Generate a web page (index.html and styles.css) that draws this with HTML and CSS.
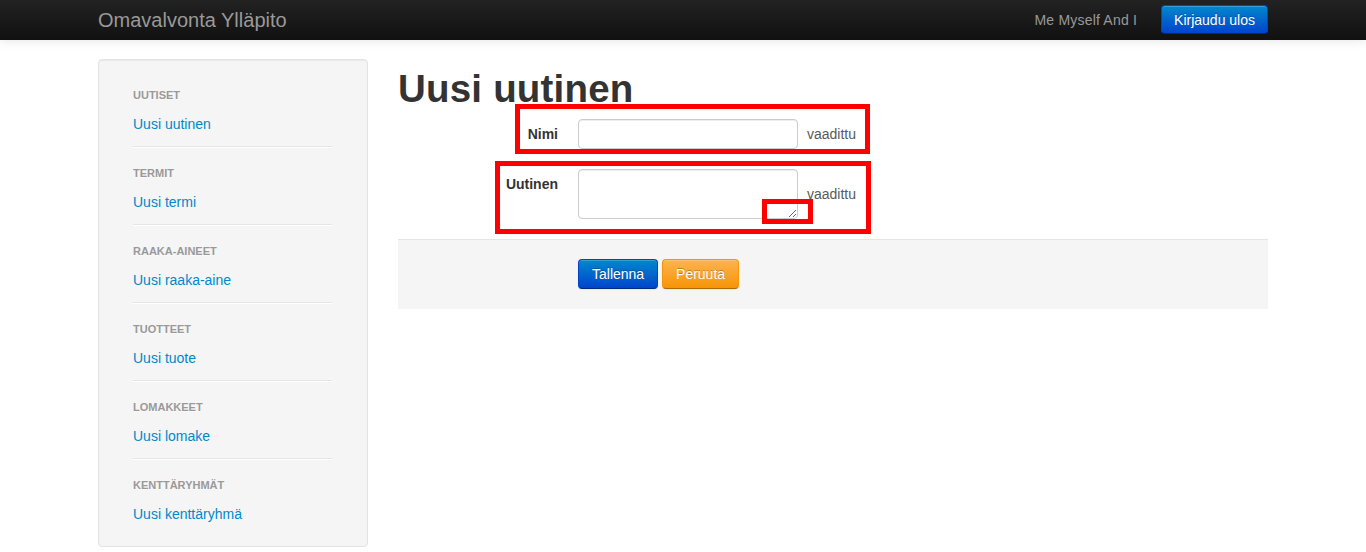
FILE: index.html
```html
<!DOCTYPE html>
<html lang="fi">
<head>
<meta charset="utf-8">
<title>Omavalvonta Ylläpito</title>
<link rel="stylesheet" href="styles.css">
</head>
<body>
<header class="navbar">
  <div class="container navbar-inner">
    <a class="brand" href="#">Omavalvonta Ylläpito</a>
    <div class="navbar-right">
      <span class="navbar-text">Me Myself And I</span>
      <a class="btn btn-primary btn-nav" href="#">Kirjaudu ulos</a>
    </div>
  </div>
</header>
<div class="container main">
  <aside class="well sidebar">
    <ul class="nav-list">
      <li class="nav-header">Uutiset</li>
      <li class="nav-link"><a href="#">Uusi uutinen</a></li>
      <li class="divider"></li>
      <li class="nav-header">Termit</li>
      <li class="nav-link"><a href="#">Uusi termi</a></li>
      <li class="divider"></li>
      <li class="nav-header">Raaka-aineet</li>
      <li class="nav-link"><a href="#">Uusi raaka-aine</a></li>
      <li class="divider"></li>
      <li class="nav-header">Tuotteet</li>
      <li class="nav-link"><a href="#">Uusi tuote</a></li>
      <li class="divider"></li>
      <li class="nav-header">Lomakkeet</li>
      <li class="nav-link"><a href="#">Uusi lomake</a></li>
      <li class="divider"></li>
      <li class="nav-header">Kenttäryhmät</li>
      <li class="nav-link"><a href="#">Uusi kenttäryhmä</a></li>
    </ul>
  </aside>
  <main class="content">
    <h1 class="title">Uusi uutinen</h1>
    <form class="form-horizontal">
      <div class="control-group">
        <label class="control-label" for="nimi">Nimi</label>
        <div class="controls">
          <input id="nimi" type="text" class="input"><span class="help-inline">vaadittu</span>
        </div>
      </div>
      <div class="control-group">
        <label class="control-label" for="uutinen">Uutinen</label>
        <div class="controls">
          <textarea id="uutinen" class="textarea" rows="2"></textarea><span class="help-inline">vaadittu</span>
        </div>
      </div>
      <div class="form-actions">
        <button type="button" class="btn btn-primary">Tallenna</button>
        <button type="button" class="btn btn-warning">Peruuta</button>
      </div>
    </form>
    <div class="mark mark-name"></div>
    <div class="mark mark-text"></div>
    <div class="mark mark-grip"></div>
  </main>
</div>
</body>
</html>
```
FILE: styles.css
```css
* { box-sizing: border-box; }

body {
  margin: 0;
  font-family: "Liberation Sans", Arial, sans-serif;
  font-size: 14px;
  line-height: 20px;
  color: #333;
  background: #fff;
}

a { text-decoration: none; }

.container {
  width: 1170px;
  margin: 0 auto;
}

/* Navbar */
.navbar {
  height: 40px;
  background: linear-gradient(to bottom, #222222, #111111);
  box-shadow: 0 1px 10px rgba(0, 0, 0, 0.1);
  position: relative;
  z-index: 2;
}

.navbar-inner {
  display: flex;
  align-items: center;
  justify-content: space-between;
  height: 40px;
}

.brand {
  font-size: 20px;
  line-height: 20px;
  color: #999;
  padding: 10px 0;
}

.navbar-right {
  display: flex;
  align-items: center;
  gap: 24px;
}

.navbar-text {
  color: #999;
  line-height: 40px;
  letter-spacing: 0.2px;
}

/* Buttons */
.btn {
  display: inline-block;
  font-family: "Liberation Sans", Arial, sans-serif;
  font-size: 14px;
  line-height: 20px;
  padding: 4px 13px;
  height: 30px;
  border-radius: 4px;
  border: 1px solid rgba(0, 0, 0, 0.15);
  border-bottom-color: rgba(0, 0, 0, 0.25);
  color: #fff;
  text-shadow: 0 -1px 0 rgba(0, 0, 0, 0.25);
  box-shadow: inset 0 1px 0 rgba(255, 255, 255, 0.2), 0 1px 2px rgba(0, 0, 0, 0.05);
  cursor: pointer;
  vertical-align: middle;
}

.btn-primary {
  background: linear-gradient(to bottom, #0088cc, #0044cc);
  border-color: #0044cc #0044cc #002a80;
}

.btn-warning {
  background: linear-gradient(to bottom, #fbb450, #f89406);
  border-color: #f89406 #f89406 #ad6704;
}

.btn-nav {
  height: 29px;
  padding: 4px 12px 3px;
  margin-top: -2px;
}

/* Main layout */
.main {
  display: flex;
  gap: 30px;
  margin-top: 19px;
  align-items: flex-start;
}

.well {
  width: 270px;
  background: #f5f5f5;
  border: 1px solid #e3e3e3;
  border-radius: 4px;
  box-shadow: inset 0 1px 1px rgba(0, 0, 0, 0.05);
}

.sidebar {
  padding: 22px 34px 19px;
}

.nav-list {
  list-style: none;
  margin: 0;
  padding: 0;
}

.nav-header {
  font-size: 11px;
  font-weight: bold;
  line-height: 20px;
  padding: 3px 0;
  color: #999;
  text-transform: uppercase;
  text-shadow: 0 1px 0 rgba(255, 255, 255, 0.5);
}

.nav-link {
  margin-top: 3px;
  padding: 3px 0;
  line-height: 20px;
}

.nav-link a {
  color: #0088cc;
}

.divider {
  height: 2px;
  margin: 9px 1px 12px 0;
  background: #e5e5e5;
  border-bottom: 1px solid #fff;
}

/* Content */
.content {
  width: 870px;
  position: relative;
}

.title {
  font-size: 38.5px;
  line-height: 40px;
  font-weight: bold;
  margin: 10px 0;
  color: #333;
  letter-spacing: 0.2px;
}

.form-horizontal {
  margin: 0 0 20px;
}

.control-group {
  display: flex;
  margin-bottom: 20px;
}

.control-label {
  width: 160px;
  padding-top: 5px;
  text-align: right;
  font-weight: bold;
  flex: none;
}

.controls {
  margin-left: 20px;
  display: flex;
  align-items: center;
}

.input,
.textarea {
  width: 220px;
  padding: 4px 6px;
  font-family: "Liberation Sans", Arial, sans-serif;
  font-size: 14px;
  line-height: 20px;
  color: #555;
  background: #fff;
  border: 1px solid #ccc;
  border-radius: 4px;
  box-shadow: inset 0 1px 1px rgba(0, 0, 0, 0.075);
  margin: 0;
}

.input { height: 30px; }

.textarea {
  height: 50px;
  resize: both;
}

.help-inline {
  padding-left: 9px;
  color: #595959;
}

.form-actions {
  padding: 19px 20px 20px 180px;
  margin-top: 20px;
  background: #f5f5f5;
  border-top: 1px solid #e5e5e5;
}

.form-actions .btn + .btn {
  margin-left: 0;
}

/* Red annotation boxes drawn over the screenshot */
.mark {
  position: absolute;
  border: 5px solid #ff0000;
  pointer-events: none;
}

.mark-name {
  left: 117px;
  top: 45px;
  width: 355px;
  height: 50px;
}

.mark-text {
  left: 97px;
  top: 102px;
  width: 376px;
  height: 73px;
}

.mark-grip {
  left: 364px;
  top: 140px;
  width: 51px;
  height: 25px;
}
```
